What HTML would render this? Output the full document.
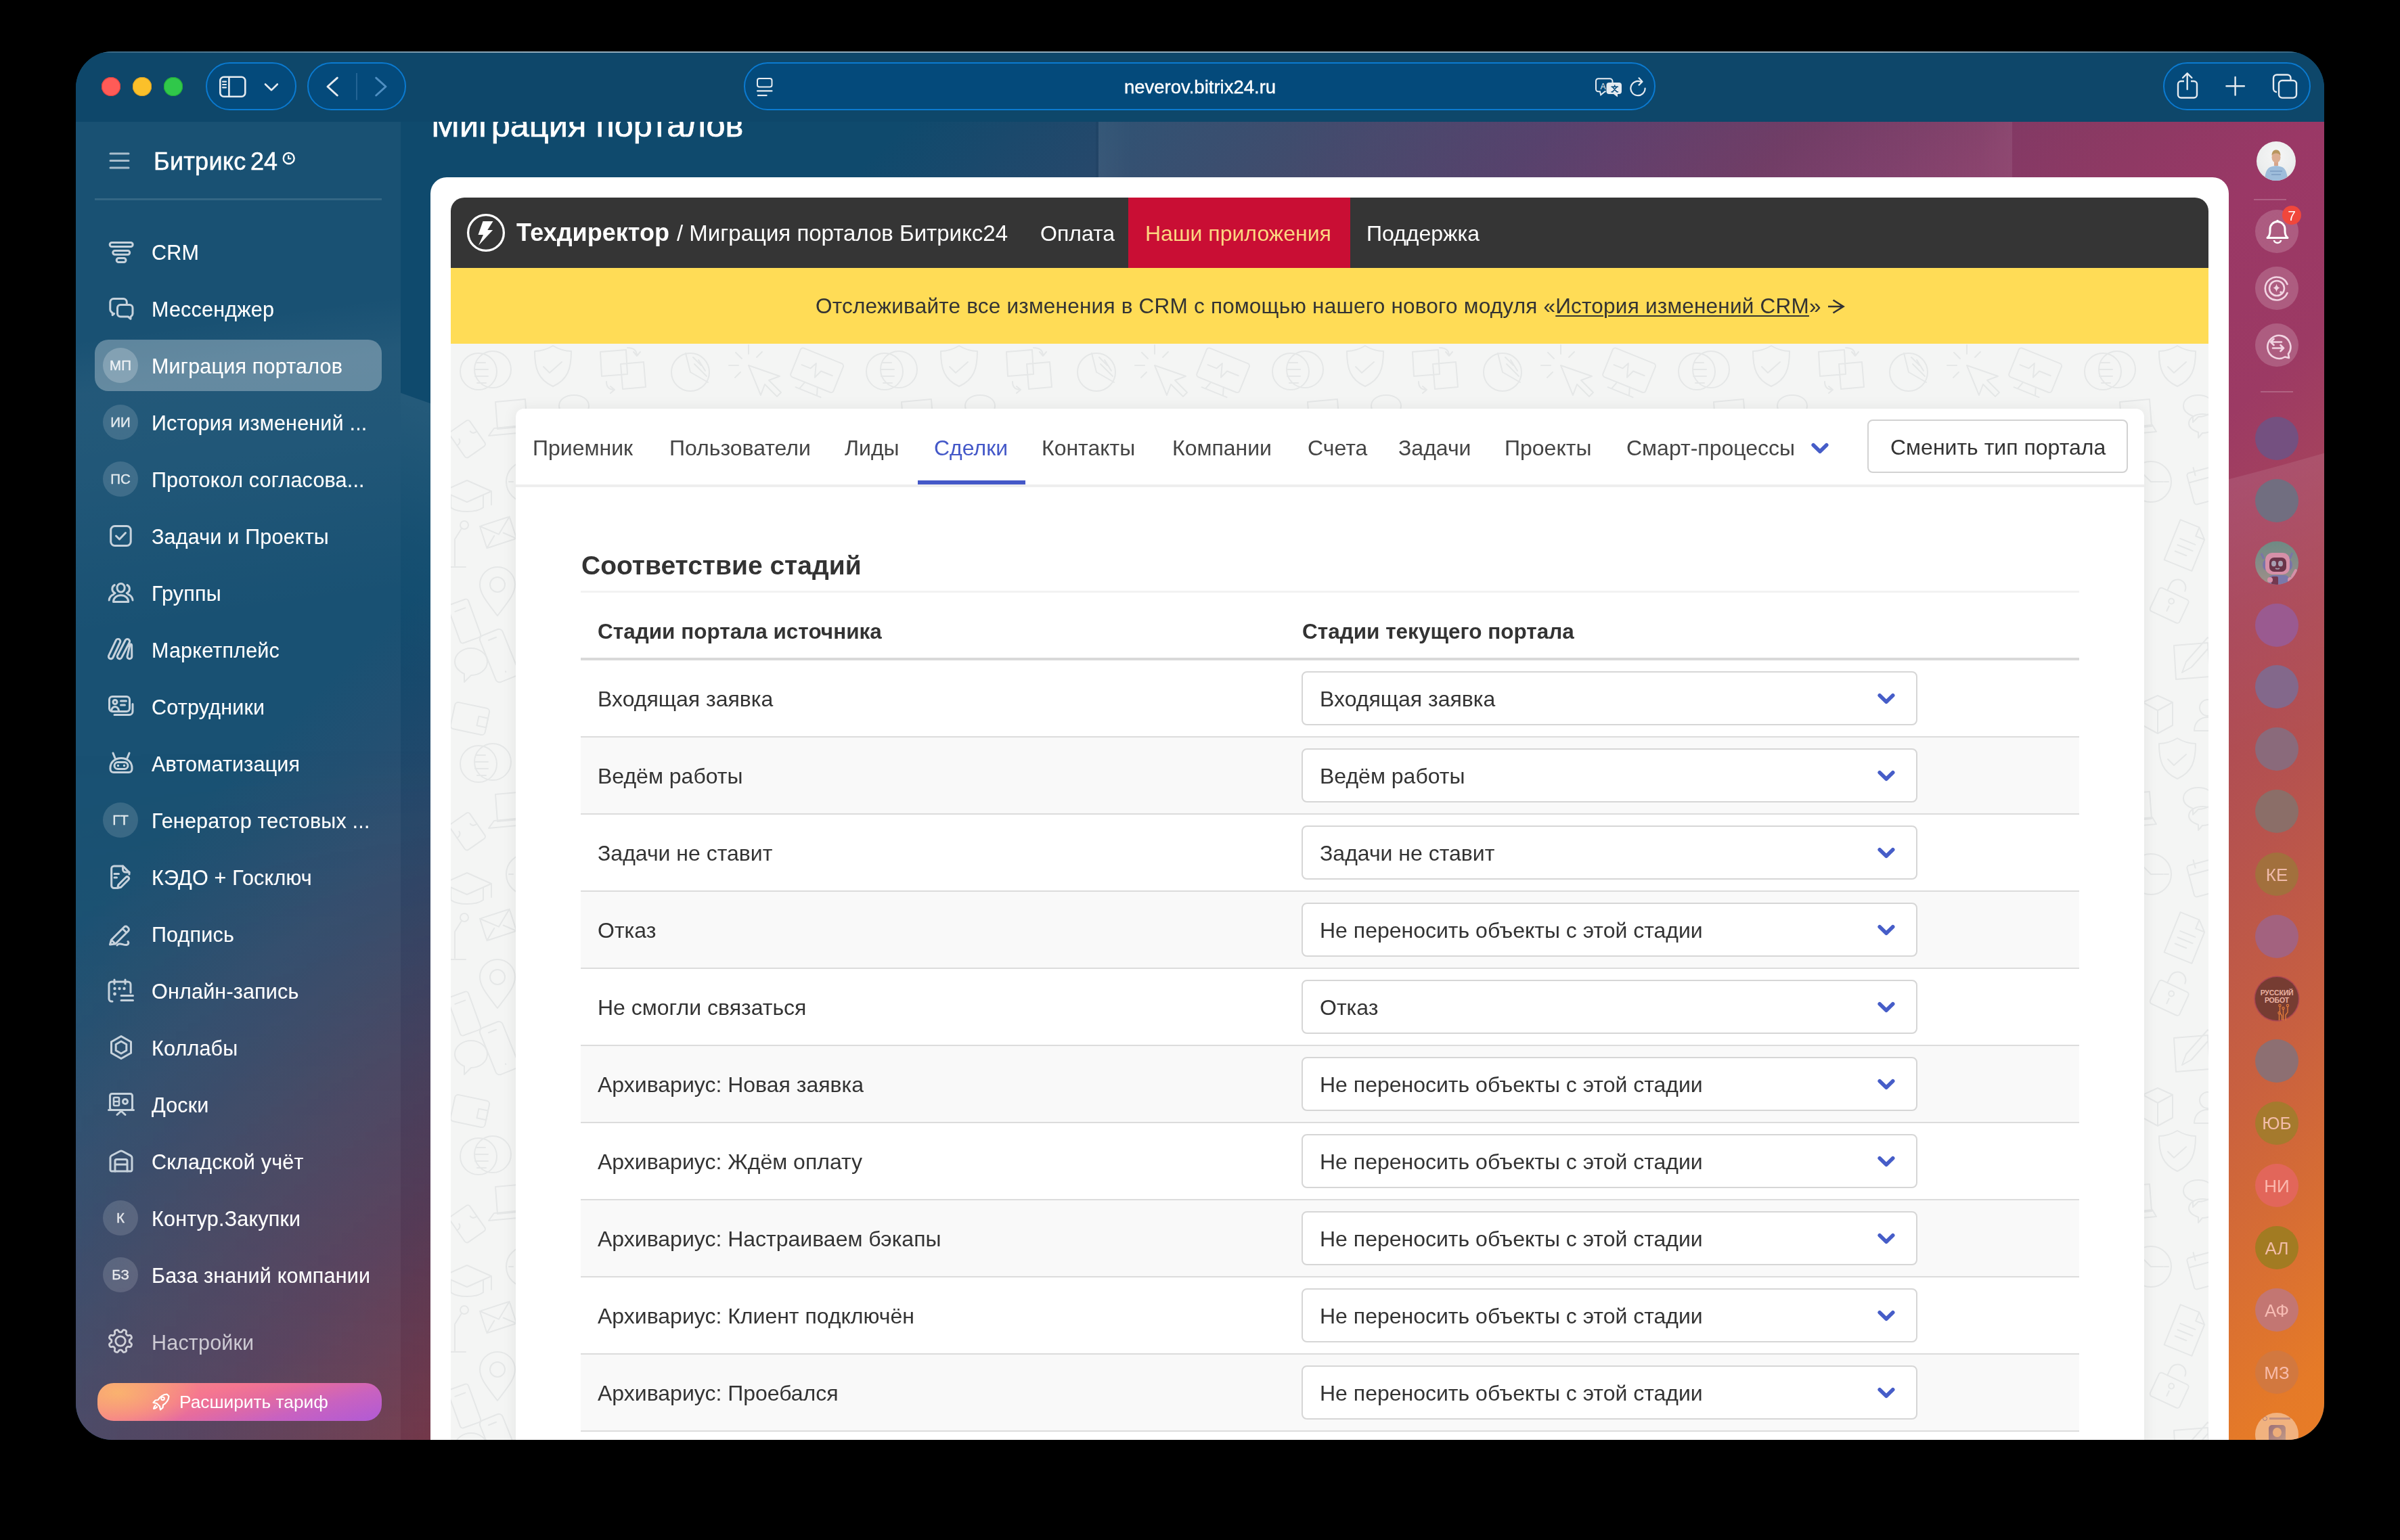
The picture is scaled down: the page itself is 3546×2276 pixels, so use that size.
<!DOCTYPE html><html><head><meta charset="utf-8"><style>
*{margin:0;padding:0;box-sizing:border-box}
html,body{width:3546px;height:2276px;background:#000;overflow:hidden;font-family:"Liberation Sans", sans-serif}
.t{position:absolute;line-height:1;white-space:nowrap;-webkit-font-smoothing:antialiased;will-change:transform}
.a{position:absolute}
#win{position:absolute;left:112px;top:76px;width:3322px;height:2052px;border-radius:54px;overflow:hidden;background:#0e476a}
#pg{position:absolute;left:-112px;top:-76px;width:3546px;height:2276px}
</style></head><body>
<div id="win"><div id="pg">
<div class="a" style="left:112px;top:180px;width:3322px;height:1948px;background:linear-gradient(136deg,#0f4a6d 0%,#0f4a6d 23%,#26486b 29.5%,#3d3f62 37%,#47395e 41%,#663453 48%,#843a62 54%,#9a3866 62%,#9c3a64 68%,#b5524f 80%,#c86040 87.5%,#e57a28 97.7%,#e87c26 100%)"></div>
<div class="a" style="left:112px;top:1100px;width:524px;height:1028px;background:linear-gradient(to right,rgba(120,110,100,0.10) 0%,rgba(170,70,40,0.22) 100%);-webkit-mask-image:linear-gradient(to bottom,transparent 0%,rgba(0,0,0,0.5) 50%,#000 100%)"></div>
<div class="a" style="left:592px;top:180px;width:2842px;height:1948px;background:radial-gradient(circle 4600px at 1558px -3928px,rgba(255,255,255,0) 4600px,rgba(255,255,255,0.09) 4601px,rgba(255,255,255,0.03) 4800px,rgba(255,255,255,0) 5000px)"></div>
<div class="a" style="left:112px;top:180px;width:480px;height:1948px;background:linear-gradient(172deg,rgba(255,255,255,0) 320px,rgba(255,255,255,0.045) 400px,rgba(255,255,255,0.035) 520px,rgba(255,255,255,0) 760px),rgba(255,255,255,0.045)"></div>
<div class="a" style="left:1900px;top:180px;width:1200px;height:82px;background:linear-gradient(to right,rgba(120,40,150,0) 0%,rgba(120,40,150,0.16) 40%,rgba(120,40,150,0.14) 70%,rgba(120,40,150,0) 100%)"></div>
<div class="a" style="left:1619px;top:180px;width:4px;height:82px;background:rgba(0,20,50,0.08)"></div>
<div class="a" style="left:1623px;top:180px;width:1350px;height:82px;background:linear-gradient(to right,rgba(255,255,255,0.085) 0px,rgba(255,255,255,0.055) 50px,rgba(255,255,255,0.055) 1300px,rgba(255,255,255,0.08) 1350px)"></div>
<div class="t" style="left:637px;top:159.8px;font-size:50.5px;color:#fff;font-weight:normal;-webkit-text-stroke:0.7px #fff">Миграция порталов</div>
<div class="a" style="left:112px;top:76px;width:3322px;height:104px;background:#0e476a"></div>
<div class="a" style="left:112px;top:76px;width:3322px;height:2px;background:linear-gradient(to right,rgba(255,255,255,0.15),rgba(255,255,255,0.55) 20%,rgba(255,255,255,0.55) 80%,rgba(255,255,255,0.15))"></div>
<div class="a" style="left:150.0px;top:113.5px;width:28px;height:28px;border-radius:50%;background:#ff5b57;box-shadow:inset 0 0 0 1px #e2403c"></div>
<div class="a" style="left:196.0px;top:113.5px;width:28px;height:28px;border-radius:50%;background:#fbc02a;box-shadow:inset 0 0 0 1px #dea122"></div>
<div class="a" style="left:242.0px;top:113.5px;width:28px;height:28px;border-radius:50%;background:#30c84a;box-shadow:inset 0 0 0 1px #22a83a"></div>
<div class="a" style="left:304px;top:92px;width:134px;height:71px;border:2px solid #0b7ad0;background:#044a7b;border-radius:36px"></div>
<div class="a" style="left:454px;top:92px;width:146px;height:71px;border:2px solid #0b7ad0;background:#044a7b;border-radius:36px"></div>
<div class="a" style="left:1099px;top:92px;width:1347px;height:71px;border:2px solid #0b7ad0;background:#044a7b;border-radius:36px"></div>
<div class="a" style="left:3196px;top:92px;width:218px;height:71px;border:2px solid #0b7ad0;background:#044a7b;border-radius:36px"></div>
<svg class="a" style="left:318px;top:106px" width="100" height="44" viewBox="0 0 100 44" fill="none"><rect x="7.3" y="7.8" width="37" height="29" rx="5.5" stroke="#e6ebf0" stroke-width="2.6"/>
<line x1="20.4" y1="8" x2="20.4" y2="37" stroke="#e6ebf0" stroke-width="2.6"/>
<line x1="11" y1="14.7" x2="16" y2="14.7" stroke="#e6ebf0" stroke-width="2.2" stroke-linecap="round"/>
<line x1="11" y1="19" x2="16" y2="19" stroke="#e6ebf0" stroke-width="2.2" stroke-linecap="round"/>
<line x1="11" y1="23.3" x2="16" y2="23.3" stroke="#e6ebf0" stroke-width="2.2" stroke-linecap="round"/>
<polyline points="74,18.5 83.1,27.2 91.8,18.5" stroke="#e6ebf0" stroke-width="2.6" stroke-linecap="round" stroke-linejoin="round"/></svg>
<svg class="a" style="left:470px;top:100px" width="120" height="56" viewBox="0 0 120 56" fill="none"><polyline points="28.3,15.1 14,28 28.3,41" stroke="#e6ebf0" stroke-width="3" stroke-linecap="round" stroke-linejoin="round"/>
<line x1="57" y1="8" x2="57" y2="47.7" stroke="#2d6b9c" stroke-width="1.6"/>
<polyline points="85.7,15.1 100,28 85.7,41" stroke="#4f8fc2" stroke-width="3" stroke-linecap="round" stroke-linejoin="round"/></svg>
<svg class="a" style="left:1110px;top:108px" width="40" height="40" viewBox="0 0 40 40" fill="none"><rect x="9" y="8" width="21.5" height="12.5" rx="3" stroke="#e6ebf0" stroke-width="2"/>
<line x1="9" y1="26.4" x2="30.5" y2="26.4" stroke="#e6ebf0" stroke-width="2.2" stroke-linecap="round"/>
<line x1="9" y1="33" x2="23.5" y2="33" stroke="#e6ebf0" stroke-width="2.2"/></svg>
<div class="t" style="left:1773px;top:115.0px;font-size:27.5px;color:#fff;font-weight:normal;transform:translateX(-50%);-webkit-text-stroke:0.4px #fff">neverov.bitrix24.ru</div>
<svg class="a" style="left:2350px;top:108px" width="90" height="44" viewBox="0 0 90 44" fill="none"><path d="M11.5 8.2 h17 a4 4 0 0 1 4 4 v3 M11.5 8.2 a3.5 3.5 0 0 0 -3.5 3.5 v12 a3.5 3.5 0 0 0 3.5 3.5 h2.5 l1.2 5 l6 -5 h1.5" stroke="#e6ebf0" stroke-width="2"/>
<text x="14.5" y="24" font-size="12" font-family="Liberation Sans" fill="#e6ebf0">A</text>
<path d="M27.5 14 h14.5 a4 4 0 0 1 4 4 v9 a4 4 0 0 1 -4 4 h-2 v4.5 l-6 -4.5 h-6.5 a4 4 0 0 1 -4 -4 v-9 a4 4 0 0 1 4 -4z" fill="#e6ebf0"/>
<path d="M30.5 20.2 h10.5 M35.7 17.5 v2.7 M32.3 20.2 l6.5 7.5 M39 20.2 l-6.5 7.5 M30.5 27.7 h3 M38.5 27.7 h2.5" stroke="#044a7b" stroke-width="1.6"/>
<path d="M80.6 22.6 a10.6 10.6 0 1 1 -6.2 -9.7" stroke="#e6ebf0" stroke-width="2.2" stroke-linecap="round"/>
<polyline points="71.5,7.3 76.5,12.7 71.5,17.6" stroke="#e6ebf0" stroke-width="2.2" stroke-linecap="round" stroke-linejoin="round"/></svg>
<svg class="a" style="left:3200px;top:100px" width="210" height="56" viewBox="0 0 210 56" fill="none"><path d="M27 20 h-4.5 a4.5 4.5 0 0 0 -4.5 4.5 v15.5 a4.5 4.5 0 0 0 4.5 4.5 h19 a4.5 4.5 0 0 0 4.5 -4.5 v-15.5 a4.5 4.5 0 0 0 -4.5 -4.5 h-4.5" stroke="#e6ebf0" stroke-width="2.4"/>
<path d="M31.7 32 v-23 M25 15 l6.7 -6.7 l6.7 6.7" stroke="#e6ebf0" stroke-width="2.4" stroke-linecap="round" stroke-linejoin="round"/>
<path d="M102.6 14 v26.5 M89.4 27.3 h26.5" stroke="#e6ebf0" stroke-width="2.4" stroke-linecap="round"/>
<path d="M164 36 a5 5 0 0 1 -5 -5 v-15.5 a5 5 0 0 1 5 -5 h15.5 a5 5 0 0 1 5 5 v3" stroke="#e6ebf0" stroke-width="2.4"/>
<rect x="167" y="19" width="26" height="25.6" rx="5" stroke="#e6ebf0" stroke-width="2.4"/></svg>
<svg class="a" style="left:150px;top:215px" width="60" height="44" viewBox="0 0 60 44" fill="none"><path d="M13 12 h27 M13 22.5 h27 M13 33 h27" stroke="#a9bdcc" stroke-width="3" stroke-linecap="round"/></svg>
<div class="t" style="left:226.5px;top:220.5px;font-size:36px;color:#fff;font-weight:normal;-webkit-text-stroke:0.5px #fff;letter-spacing:0.3px">Битрикс</div>
<div class="t" style="left:370px;top:220.5px;font-size:36px;color:#fff;font-weight:normal;-webkit-text-stroke:0.5px #fff">24</div>
<svg class="a" style="left:414px;top:222px" width="26" height="24" viewBox="0 0 26 24" fill="none"><circle cx="12.7" cy="12" r="8" stroke="#fff" stroke-width="2.4"/><path d="M12.2 7.5 v5 h4" stroke="#fff" stroke-width="2.2"/></svg>
<div class="a" style="left:140px;top:293px;width:424px;height:3px;background:rgba(255,255,255,0.12)"></div>
<svg class="a" style="left:158.5px;top:352px" width="40" height="40" viewBox="0 0 40 40" fill="none"><rect x="3.2" y="6.5" width="34" height="6" rx="3" stroke="#c6d2dc" stroke-width="3" fill="none" stroke-linecap="round" stroke-linejoin="round"/><rect x="7.8" y="18.5" width="24.9" height="5.7" rx="2.85" stroke="#c6d2dc" stroke-width="3" fill="none" stroke-linecap="round" stroke-linejoin="round"/><rect x="13.2" y="29.5" width="13.8" height="6" rx="3" stroke="#c6d2dc" stroke-width="3" fill="none" stroke-linecap="round" stroke-linejoin="round"/></svg>
<svg class="a" style="left:158.5px;top:436px" width="40" height="40" viewBox="0 0 40 40" fill="none"><path d="M28.3 13 v-2.5 a5 5 0 0 0 -5 -5 h-14.5 a5 5 0 0 0 -5 5 v11 c0 1.5 .5 2.5 1.8 3.6 l1.6 1.4 v3.2 l2.5 -2.2" stroke="#c6d2dc" stroke-width="3" fill="none" stroke-linecap="round" stroke-linejoin="round"/><path d="M19 14.5 h13.5 a4.5 4.5 0 0 1 4.5 4.5 v8.5 c0 1.5 -.5 2.5 -1.8 3.6 l-1.2 1 v3.2 l-3.8 -3.3 h-11.2 a4.5 4.5 0 0 1 -4.5 -4.5 v-8.5 a4.5 4.5 0 0 1 4.5 -4.5z" stroke="#c6d2dc" stroke-width="3" fill="none" stroke-linecap="round" stroke-linejoin="round"/></svg>
<svg class="a" style="left:158.5px;top:772px" width="40" height="40" viewBox="0 0 40 40" fill="none"><rect x="4.7" y="5.5" width="29.5" height="29" rx="6" stroke="#c6d2dc" stroke-width="3" fill="none" stroke-linecap="round" stroke-linejoin="round"/><polyline points="12.5,20 17.5,25 26.5,15.5" stroke="#c6d2dc" stroke-width="3" fill="none" stroke-linecap="round" stroke-linejoin="round"/></svg>
<svg class="a" style="left:158.5px;top:856px" width="40" height="40" viewBox="0 0 40 40" fill="none"><ellipse cx="19.6" cy="12.8" rx="5.6" ry="6.3" stroke="#c6d2dc" stroke-width="3" fill="none" stroke-linecap="round" stroke-linejoin="round"/><path d="M8.5 33.4 c0 -6 5 -9.7 11.1 -9.7 s11.1 3.7 11.1 9.7 z" stroke="#c6d2dc" stroke-width="3" fill="none" stroke-linecap="round" stroke-linejoin="round"/><path d="M10.3 8.6 c-4.8 2.6 -4.8 9.4 .7 12 M28.9 8.6 c4.8 2.6 4.8 9.4 -.7 12 M9 22.4 c-3.5 1.5 -6.5 4.5 -6.8 8.6 M30.2 22.4 c3.5 1.5 6.5 4.5 6.8 8.6" stroke="#c6d2dc" stroke-width="3" fill="none" stroke-linecap="round" stroke-linejoin="round"/></svg>
<svg class="a" style="left:158.5px;top:940px" width="40" height="40" viewBox="0 0 40 40" fill="none"><path d="M7.88 31.75 L18.48 9.25 A3.4 3.4 0 0 0 12.32 6.35 L1.72 28.85 A3.4 3.4 0 0 0 7.88 31.75z M20.62 31.86 L32.22 9.36 A3.4 3.4 0 0 0 26.18 6.24 L14.58 28.74 A3.4 3.4 0 0 0 20.62 31.86z M29 30.3 a3.4 3.4 0 0 0 6.8 0 L35.6 13.5 c-.1 -1.6 -1.8 -2 -2.6 -.6 L29.3 28.8z" stroke="#c6d2dc" stroke-width="3" fill="none" stroke-linecap="round" stroke-linejoin="round"/></svg>
<svg class="a" style="left:158.5px;top:1024px" width="40" height="40" viewBox="0 0 40 40" fill="none"><path d="M10 32.5 h22 a5 5 0 0 0 5 -5 v-11" stroke="#c6d2dc" stroke-width="3" fill="none" stroke-linecap="round" stroke-linejoin="round"/><rect x="2.5" y="5.5" width="30" height="22" rx="4.5" stroke="#c6d2dc" stroke-width="3" fill="none" stroke-linecap="round" stroke-linejoin="round"/><circle cx="11" cy="13.5" r="3" stroke="#c6d2dc" stroke-width="3" fill="none" stroke-linecap="round" stroke-linejoin="round"/><path d="M5.5 26 c1 -4 3 -5.5 5.5 -5.5 s4.5 1.5 5.5 5.5 M19.5 12 h8 M19.5 18 h6" stroke="#c6d2dc" stroke-width="3" fill="none" stroke-linecap="round" stroke-linejoin="round"/></svg>
<svg class="a" style="left:158.5px;top:1108px" width="40" height="40" viewBox="0 0 40 40" fill="none"><path d="M4 27 c0 -9 7 -14.5 16 -14.5 s16 5.5 16 14.5 v1.5 c0 3 -2 5 -5 5 h-22 c-3 0 -5 -2 -5 -5z M11 12.5 L8 5 M29 12.5 L32 5" stroke="#c6d2dc" stroke-width="3" fill="none" stroke-linecap="round" stroke-linejoin="round"/><rect x="10" y="18.5" width="20" height="10" rx="5" stroke="#c6d2dc" stroke-width="3" fill="none" stroke-linecap="round" stroke-linejoin="round"/><circle cx="15.5" cy="23.5" r="1" fill="#c6d2dc" stroke="#c6d2dc" stroke-width="1.5"/><circle cx="24.5" cy="23.5" r="1" fill="#c6d2dc" stroke="#c6d2dc" stroke-width="1.5"/></svg>
<svg class="a" style="left:158.5px;top:1276px" width="40" height="40" viewBox="0 0 40 40" fill="none"><path d="M13 36.5 h-3.5 a3.8 3.8 0 0 1 -3.8 -3.8 v-25 a3.8 3.8 0 0 1 3.8 -3.8 h13 l9.5 9.5 v2.5" stroke="#c6d2dc" stroke-width="3" fill="none" stroke-linecap="round" stroke-linejoin="round"/><path d="M22.5 4 v5 a4 4 0 0 0 4 4 h5.5" stroke="#c6d2dc" stroke-width="3" fill="none" stroke-linecap="round" stroke-linejoin="round"/><path d="M10 15.5 h6.5 M10 21 h3.5" stroke="#c6d2dc" stroke-width="3" fill="none" stroke-linecap="round" stroke-linejoin="round"/><path d="M14.5 36.5 l1.5 -5 l11 -11 a2.6 2.6 0 0 1 3.7 3.7 l-11 11z" stroke="#c6d2dc" stroke-width="3" fill="none" stroke-linecap="round" stroke-linejoin="round"/></svg>
<svg class="a" style="left:158.5px;top:1360px" width="40" height="40" viewBox="0 0 40 40" fill="none"><path d="M3.5 36 l2 -7 l19 -19 a3.2 3.2 0 0 1 4.5 0 l1.5 1.5 a3.2 3.2 0 0 1 0 4.5 l-19 19z M22 12.5 l6 6 M5.5 29 l5.5 5.5" stroke="#c6d2dc" stroke-width="3" fill="none" stroke-linecap="round" stroke-linejoin="round"/><path d="M14 37 c2 -3 3 -2 5 -2 s6 2 9 1.5 c3 -.5 3.5 -3 2 -5" stroke="#c6d2dc" stroke-width="3" fill="none" stroke-linecap="round" stroke-linejoin="round"/></svg>
<svg class="a" style="left:158.5px;top:1444px" width="40" height="40" viewBox="0 0 40 40" fill="none"><path d="M7 36 h-1 a4 4 0 0 1 -4 -4 v-21 a4 4 0 0 1 4 -4 h24 a4 4 0 0 1 4 4 v12 M10 4 v6 M26 4 v6" stroke="#c6d2dc" stroke-width="3" fill="none" stroke-linecap="round" stroke-linejoin="round"/><circle cx="10.5" cy="17" r="2.2" fill="#c6d2dc"/><circle cx="17.5" cy="17" r="2.2" fill="#c6d2dc"/><circle cx="24.5" cy="17" r="2.2" fill="#c6d2dc"/><circle cx="10.5" cy="25" r="2.4" fill="#c6d2dc"/><path d="M20 27.5 h17.5 M20 34.5 h17.5" stroke="#c6d2dc" stroke-width="3" fill="none" stroke-linecap="round" stroke-linejoin="round"/></svg>
<svg class="a" style="left:158.5px;top:1528px" width="40" height="40" viewBox="0 0 40 40" fill="none"><path d="M20 3.5 L34.5 11.8 V28.2 L20 36.5 L5.5 28.2 V11.8z" stroke="#c6d2dc" stroke-width="3" fill="none" stroke-linecap="round" stroke-linejoin="round"/><path d="M20 11 L27.8 15.5 V24.5 L20 29 L12.2 24.5 V15.5z" stroke="#c6d2dc" stroke-width="3" fill="none" stroke-linecap="round" stroke-linejoin="round"/></svg>
<svg class="a" style="left:158.5px;top:1612px" width="40" height="40" viewBox="0 0 40 40" fill="none"><rect x="3.5" y="4.5" width="33" height="24" rx="3" stroke="#c6d2dc" stroke-width="3" fill="none" stroke-linecap="round" stroke-linejoin="round"/><path d="M1.5 28.5 h37 M14 35.5 l6 -5.5 l6 5.5" stroke="#c6d2dc" stroke-width="3" fill="none" stroke-linecap="round" stroke-linejoin="round"/><rect x="9" y="10" width="8" height="12" rx="1.5" stroke="#c6d2dc" stroke-width="2.6" fill="none"/><path d="M9 16 h8" stroke="#c6d2dc" stroke-width="2.4"/><circle cx="26" cy="16" r="3.5" stroke="#c6d2dc" stroke-width="3" fill="none" stroke-linecap="round" stroke-linejoin="round"/></svg>
<svg class="a" style="left:158.5px;top:1696px" width="40" height="40" viewBox="0 0 40 40" fill="none"><path d="M4 33 V15 c0 -1.5 .7 -2.5 2 -3.2 L18 5.5 c1.3 -.6 2.7 -.6 4 0 L34 11.8 c1.3 .7 2 1.7 2 3.2 V33 c0 1 -1 2 -2 2 H6 c-1 0 -2 -1 -2 -2z" stroke="#c6d2dc" stroke-width="3" fill="none" stroke-linecap="round" stroke-linejoin="round"/><path d="M11 35 V20 a2.5 2.5 0 0 1 2.5 -2.5 h13 a2.5 2.5 0 0 1 2.5 2.5 V35 M11 25 h18" stroke="#c6d2dc" stroke-width="3" fill="none" stroke-linecap="round" stroke-linejoin="round"/></svg>
<svg class="a" style="left:158px;top:1962px" width="40" height="40" viewBox="0 0 40 40" fill="none"><path d="M33.20 20.00 L33.20 20.35 L33.21 20.69 L33.23 21.04 L33.29 21.40 L33.46 21.77 L33.85 22.19 L34.57 22.70 L35.44 23.28 L36.11 23.87 L36.44 24.41 L36.53 24.90 L36.48 25.36 L36.38 25.80 L36.24 26.23 L36.08 26.66 L35.89 27.08 L35.68 27.48 L35.44 27.87 L35.15 28.22 L34.74 28.51 L34.13 28.66 L33.24 28.60 L32.21 28.39 L31.35 28.24 L30.77 28.27 L30.39 28.41 L30.09 28.62 L29.83 28.85 L29.58 29.09 L29.33 29.33 L29.09 29.58 L28.85 29.83 L28.62 30.09 L28.41 30.39 L28.27 30.77 L28.24 31.35 L28.39 32.21 L28.60 33.24 L28.66 34.13 L28.51 34.74 L28.22 35.15 L27.87 35.44 L27.48 35.68 L27.08 35.89 L26.66 36.08 L26.23 36.24 L25.80 36.38 L25.36 36.48 L24.90 36.53 L24.41 36.44 L23.87 36.11 L23.28 35.44 L22.70 34.57 L22.19 33.85 L21.77 33.46 L21.40 33.29 L21.04 33.23 L20.69 33.21 L20.35 33.20 L20.00 33.20 L19.65 33.20 L19.31 33.21 L18.96 33.23 L18.60 33.29 L18.23 33.46 L17.81 33.85 L17.30 34.57 L16.72 35.44 L16.13 36.11 L15.59 36.44 L15.10 36.53 L14.64 36.48 L14.20 36.38 L13.77 36.24 L13.34 36.08 L12.92 35.89 L12.52 35.68 L12.13 35.44 L11.78 35.15 L11.49 34.74 L11.34 34.13 L11.40 33.24 L11.61 32.21 L11.76 31.35 L11.73 30.77 L11.59 30.39 L11.38 30.09 L11.15 29.83 L10.91 29.58 L10.67 29.33 L10.42 29.09 L10.17 28.85 L9.91 28.62 L9.61 28.41 L9.23 28.27 L8.65 28.24 L7.79 28.39 L6.76 28.60 L5.87 28.66 L5.26 28.51 L4.85 28.22 L4.56 27.87 L4.32 27.48 L4.11 27.08 L3.92 26.66 L3.76 26.23 L3.62 25.80 L3.52 25.36 L3.47 24.90 L3.56 24.41 L3.89 23.87 L4.56 23.28 L5.43 22.70 L6.15 22.19 L6.54 21.77 L6.71 21.40 L6.77 21.04 L6.79 20.69 L6.80 20.35 L6.80 20.00 L6.80 19.65 L6.79 19.31 L6.77 18.96 L6.71 18.60 L6.54 18.23 L6.15 17.81 L5.43 17.30 L4.56 16.72 L3.89 16.13 L3.56 15.59 L3.47 15.10 L3.52 14.64 L3.62 14.20 L3.76 13.77 L3.92 13.34 L4.11 12.92 L4.32 12.52 L4.56 12.13 L4.85 11.78 L5.26 11.49 L5.87 11.34 L6.76 11.40 L7.79 11.61 L8.65 11.76 L9.23 11.73 L9.61 11.59 L9.91 11.38 L10.17 11.15 L10.42 10.91 L10.67 10.67 L10.91 10.42 L11.15 10.17 L11.38 9.91 L11.59 9.61 L11.73 9.23 L11.76 8.65 L11.61 7.79 L11.40 6.76 L11.34 5.87 L11.49 5.26 L11.78 4.85 L12.13 4.56 L12.52 4.32 L12.92 4.11 L13.34 3.92 L13.77 3.76 L14.20 3.62 L14.64 3.52 L15.10 3.47 L15.59 3.56 L16.13 3.89 L16.72 4.56 L17.30 5.43 L17.81 6.15 L18.23 6.54 L18.60 6.71 L18.96 6.77 L19.31 6.79 L19.65 6.80 L20.00 6.80 L20.35 6.80 L20.69 6.79 L21.04 6.77 L21.40 6.71 L21.77 6.54 L22.19 6.15 L22.70 5.43 L23.28 4.56 L23.87 3.89 L24.41 3.56 L24.90 3.47 L25.36 3.52 L25.80 3.62 L26.23 3.76 L26.66 3.92 L27.08 4.11 L27.48 4.32 L27.87 4.56 L28.22 4.85 L28.51 5.26 L28.66 5.87 L28.60 6.76 L28.39 7.79 L28.24 8.65 L28.27 9.23 L28.41 9.61 L28.62 9.91 L28.85 10.17 L29.09 10.42 L29.33 10.67 L29.58 10.91 L29.83 11.15 L30.09 11.38 L30.39 11.59 L30.77 11.73 L31.35 11.76 L32.21 11.61 L33.24 11.40 L34.13 11.34 L34.74 11.49 L35.15 11.78 L35.44 12.13 L35.68 12.52 L35.89 12.92 L36.08 13.34 L36.24 13.77 L36.38 14.20 L36.48 14.64 L36.53 15.10 L36.44 15.59 L36.11 16.13 L35.44 16.72 L34.57 17.30 L33.85 17.81 L33.46 18.23 L33.29 18.60 L33.23 18.96 L33.21 19.31 L33.20 19.65z" stroke="#cfd0d8" stroke-width="2.8" stroke-linejoin="round" fill="none"/><circle cx="20" cy="20" r="7.2" stroke="#cfd0d8" stroke-width="2.8" fill="none"/></svg>
<div class="a" style="left:140px;top:502px;width:424px;height:76px;background:rgba(255,255,255,0.3);border-radius:20px"></div>
<div class="t" style="left:223.5px;top:358.2px;font-size:30.5px;color:#fff;font-weight:normal;-webkit-text-stroke:0.1px #fff;letter-spacing:0.2px">CRM</div>
<div class="t" style="left:223.5px;top:442.2px;font-size:30.5px;color:#fff;font-weight:normal;-webkit-text-stroke:0.1px #fff;letter-spacing:0.2px">Мессенджер</div>
<div class="a" style="left:152.0px;top:514.0px;width:52px;height:52px;border-radius:50%;background:rgba(255,255,255,0.22)"></div>
<div class="t" style="left:178px;top:530.1px;font-size:20.5px;color:rgba(255,255,255,0.82);font-weight:normal;transform:translateX(-50%);-webkit-text-stroke:0.4px rgba(255,255,255,0.82)">МП</div>
<div class="t" style="left:223.5px;top:526.2px;font-size:30.5px;color:#fff;font-weight:normal;-webkit-text-stroke:0.1px #fff;letter-spacing:0.2px">Миграция порталов</div>
<div class="a" style="left:152.0px;top:598.0px;width:52px;height:52px;border-radius:50%;background:rgba(255,255,255,0.14)"></div>
<div class="t" style="left:178px;top:614.1px;font-size:20.5px;color:rgba(255,255,255,0.82);font-weight:normal;transform:translateX(-50%);-webkit-text-stroke:0.4px rgba(255,255,255,0.82)">ИИ</div>
<div class="t" style="left:223.5px;top:610.2px;font-size:30.5px;color:#fff;font-weight:normal;-webkit-text-stroke:0.1px #fff;letter-spacing:0.2px">История изменений ...</div>
<div class="a" style="left:152.0px;top:682.0px;width:52px;height:52px;border-radius:50%;background:rgba(255,255,255,0.14)"></div>
<div class="t" style="left:178px;top:698.1px;font-size:20.5px;color:rgba(255,255,255,0.82);font-weight:normal;transform:translateX(-50%);-webkit-text-stroke:0.4px rgba(255,255,255,0.82)">ПС</div>
<div class="t" style="left:223.5px;top:694.2px;font-size:30.5px;color:#fff;font-weight:normal;-webkit-text-stroke:0.1px #fff;letter-spacing:0.2px">Протокол согласова...</div>
<div class="t" style="left:223.5px;top:778.2px;font-size:30.5px;color:#fff;font-weight:normal;-webkit-text-stroke:0.1px #fff;letter-spacing:0.2px">Задачи и Проекты</div>
<div class="t" style="left:223.5px;top:862.2px;font-size:30.5px;color:#fff;font-weight:normal;-webkit-text-stroke:0.1px #fff;letter-spacing:0.2px">Группы</div>
<div class="t" style="left:223.5px;top:946.2px;font-size:30.5px;color:#fff;font-weight:normal;-webkit-text-stroke:0.1px #fff;letter-spacing:0.2px">Маркетплейс</div>
<div class="t" style="left:223.5px;top:1030.2px;font-size:30.5px;color:#fff;font-weight:normal;-webkit-text-stroke:0.1px #fff;letter-spacing:0.2px">Сотрудники</div>
<div class="t" style="left:223.5px;top:1114.2px;font-size:30.5px;color:#fff;font-weight:normal;-webkit-text-stroke:0.1px #fff;letter-spacing:0.2px">Автоматизация</div>
<div class="a" style="left:152.0px;top:1186.0px;width:52px;height:52px;border-radius:50%;background:rgba(255,255,255,0.14)"></div>
<div class="t" style="left:178px;top:1202.1px;font-size:20.5px;color:rgba(255,255,255,0.82);font-weight:normal;transform:translateX(-50%);-webkit-text-stroke:0.4px rgba(255,255,255,0.82)">ГТ</div>
<div class="t" style="left:223.5px;top:1198.2px;font-size:30.5px;color:#fff;font-weight:normal;-webkit-text-stroke:0.1px #fff;letter-spacing:0.2px">Генератор тестовых ...</div>
<div class="t" style="left:223.5px;top:1282.2px;font-size:30.5px;color:#fff;font-weight:normal;-webkit-text-stroke:0.1px #fff;letter-spacing:0.2px">КЭДО + Госключ</div>
<div class="t" style="left:223.5px;top:1366.2px;font-size:30.5px;color:#fff;font-weight:normal;-webkit-text-stroke:0.1px #fff;letter-spacing:0.2px">Подпись</div>
<div class="t" style="left:223.5px;top:1450.2px;font-size:30.5px;color:#fff;font-weight:normal;-webkit-text-stroke:0.1px #fff;letter-spacing:0.2px">Онлайн-запись</div>
<div class="t" style="left:223.5px;top:1534.2px;font-size:30.5px;color:#fff;font-weight:normal;-webkit-text-stroke:0.1px #fff;letter-spacing:0.2px">Коллабы</div>
<div class="t" style="left:223.5px;top:1618.2px;font-size:30.5px;color:#fff;font-weight:normal;-webkit-text-stroke:0.1px #fff;letter-spacing:0.2px">Доски</div>
<div class="t" style="left:223.5px;top:1702.2px;font-size:30.5px;color:#fff;font-weight:normal;-webkit-text-stroke:0.1px #fff;letter-spacing:0.2px">Складской учёт</div>
<div class="a" style="left:152.0px;top:1774.0px;width:52px;height:52px;border-radius:50%;background:rgba(255,255,255,0.14)"></div>
<div class="t" style="left:178px;top:1790.1px;font-size:20.5px;color:rgba(255,255,255,0.82);font-weight:normal;transform:translateX(-50%);-webkit-text-stroke:0.4px rgba(255,255,255,0.82)">К</div>
<div class="t" style="left:223.5px;top:1786.2px;font-size:30.5px;color:#fff;font-weight:normal;-webkit-text-stroke:0.1px #fff;letter-spacing:0.2px">Контур.Закупки</div>
<div class="a" style="left:152.0px;top:1858.0px;width:52px;height:52px;border-radius:50%;background:rgba(255,255,255,0.14)"></div>
<div class="t" style="left:178px;top:1874.1px;font-size:20.5px;color:rgba(255,255,255,0.82);font-weight:normal;transform:translateX(-50%);-webkit-text-stroke:0.4px rgba(255,255,255,0.82)">БЗ</div>
<div class="t" style="left:223.5px;top:1870.2px;font-size:30.5px;color:#fff;font-weight:normal;-webkit-text-stroke:0.1px #fff;letter-spacing:0.2px">База знаний компании</div>
<div class="t" style="left:223.5px;top:1968.7px;font-size:30.5px;color:#cdcad3;font-weight:normal;letter-spacing:0.2px">Настройки</div>
<div class="a" style="left:144px;top:2044px;width:420px;height:56px;border-radius:24px;background:radial-gradient(ellipse 120px 60px at 30px 14px,rgba(250,180,110,0.95),rgba(250,180,110,0) 100%),linear-gradient(165deg,#f6907e 0%,#f57690 35%,#e66c9e 50%,#c862c0 72%,#b05ad6 100%)"></div>
<div class="t" style="left:265px;top:2058.7px;font-size:26.3px;color:#fff;font-weight:normal;">Расширить тариф</div>
<svg class="a" style="left:222px;top:2056px" width="30" height="30" viewBox="0 0 30 30" fill="none"><path d="M24.5 4.5 c-6 .5 -10 3.5 -13 8.5 l-4 .5 l-3 3.5 l5 1 l4.5 4.5 l1 5 l3.5 -3 l.5 -4 c5 -3 8 -7 8.5 -13z" stroke="#fff" stroke-width="2.2" fill="none" stroke-linejoin="round"/><circle cx="18.5" cy="11" r="2.3" stroke="#fff" stroke-width="2" fill="none"/><path d="M8.5 20.5 c-2 1 -3 3 -3.5 5.5 c2.5 -.5 4.5 -1.5 5.5 -3.5" stroke="#fff" stroke-width="2" fill="none" stroke-linejoin="round"/></svg>
<div class="a" style="left:636px;top:262px;width:2657px;height:1938px;background:#fff;border-radius:24px 24px 0 0"></div>
<div class="a" style="left:666px;top:292px;width:2597px;height:104px;background:#353535;border-radius:20px 20px 0 0"></div>
<div class="a" style="left:1667px;top:292px;width:328px;height:104px;background:#c90e34"></div>
<div class="a" style="left:666px;top:396px;width:2597px;height:112px;background:#ffdc56"></div>
<div class="a" style="left:666px;top:508px;width:2597px;height:1692px;background:#f4f5f4"></div>
<svg class="a" style="left:666px;top:508px" width="2597" height="1620"><defs><pattern id="dd" width="600" height="580" patternUnits="userSpaceOnUse"><g fill="none" stroke="#e5e7e7" stroke-width="2" stroke-linejoin="round" stroke-linecap="round">
<circle cx="41" cy="41" r="27"/><circle cx="62" cy="38" r="27"/><path d="M37 28 h14 M36 38 h19 M36 48 h19 M39 58 h13"/>
<path d="M151 3 c10 6 18 8 27 8 c0 26 -5 42 -27 52 c-22 -10 -27 -26 -27 -52 c9 0 17 -2 27 -8z M137 34 l9 9 l18 -16"/>
<path d="M221 12 l38 -3 l2 36 l-38 3z M251 30 l34 -3 l3 37 l-34 3z M261 6 c10 0 14 4 14 12 M270 12 l5 6 l5 -6 M230 56 c0 8 4 12 12 12 M236 63 l6 5 l-6 5"/>
<circle cx="354" cy="42" r="28"/><path d="M354 42 L347 14 M354 42 L380 57 M358 20 L370 32 M366 24 L376 40 M360 30 L378 48"/>
<path d="M440 32 L458 76 L464 60 L482 78 L488 72 L470 54 L486 48z M430 22 l-9 -9 M440 15 v-13 M425 32 h-14 M452 20 l8 -8 M428 42 l-8 8"/>
<g transform="rotate(22 540 42)"><rect x="506" y="16" width="68" height="46" rx="4"/><path d="M516 40 h14 l5 -10 l6 20 l5 -12 h18 M530 62 l-4 12 M550 62 l4 12 M520 74 h40"/></g>
<g transform="rotate(-35 24 140)"><rect x="6" y="118" width="36" height="46" rx="4"/><path d="M6 140 q8 0 8 -6 M42 140 q-8 0 -8 -6"/></g>
<path d="M66 86 l44 -4 l3 40 l-44 4z M56 136 l64 -6 l-6 -10 l-50 5z"/>
<circle cx="112" cy="204" r="30"/><path d="M112 204 l-14 -14 M112 204 h18 M86 204 h6 M132 204 h6"/>
<path d="M-12 218 l36 -16 l36 16 l-36 16z M0 224 v18 c10 8 38 8 48 0 v-18 M60 218 v20"/>
<g transform="rotate(-18 70 282)"><rect x="48" y="262" width="46" height="34" rx="3"/><path d="M48 262 l23 20 l23 -20 M48 296 l16 -14 M94 296 l-16 -14"/></g>
<circle cx="20" cy="268" r="6"/><path d="M16 273 l-10 16 M6 290 v38 M-6 330 h28"/>
<path d="M69 402 c-15 -20 -26 -32 -26 -46 a26 26 0 0 1 52 0 c0 14 -11 26 -26 46z"/><circle cx="69" cy="356" r="11"/>
<g transform="rotate(-20 20 410)"><rect x="4" y="380" width="32" height="60" rx="4"/><path d="M12 392 h16"/></g>
<g transform="rotate(-22 72 462)"><rect x="54" y="424" width="36" height="74" rx="6"/><path d="M66 434 h12 M72 486 v1"/></g>
<path d="M6 470 c0 -12 12 -20 24 -20 s24 8 24 20 s-12 20 -24 20 l-10 10 v-12 c-8 -4 -14 -10 -14 -18z"/>
<g transform="rotate(12 28 556)"><rect x="2" y="534" width="52" height="40" rx="5"/><path d="M40 548 h14 v14 h-14z"/></g>
<path d="M160 92 c0 -10 10 -16 22 -16 s22 6 22 16 s-10 16 -22 16 l-8 8 v-9 c-8 -3 -14 -8 -14 -15z M168 118 c0 -9 10 -14 20 -14 s20 5 20 14 s-9 14 -20 14 l-6 7 v-8 c-8 -3 -14 -7 -14 -13z"/>
<g transform="rotate(-15 190 210)"><rect x="170" y="186" width="50" height="48" rx="4"/><path d="M170 200 h50 M182 180 v12 M208 180 v12"/></g>
<g transform="rotate(22 164 298)"><path d="M142 266 h30 l14 14 v50 h-44z M172 266 v14 h14 M152 292 h24 M152 302 h24 M152 312 h18"/></g>
<g transform="rotate(25 140 385)"><rect x="116" y="368" width="48" height="38" rx="4"/><path d="M128 368 v-10 a12 12 0 0 1 24 0 M140 384 a4 4 0 1 1 0.1 0 M140 388 v8"/></g>
<path d="M146 446 l50 -4 l3 50 l-50 4z M158 486 l6 -16 l32 -36 l8 8 l-32 36z"/>
<path d="M100 530 l22 -10 l22 10 v34 l-22 12 l-22 -12z M100 530 l22 12 l22 -12 M122 542 v34"/>
<circle cx="196" cy="538" r="12"/><path d="M176 572 c0 -12 8 -20 20 -20 s20 8 20 20z"/>
</g></pattern></defs><rect width="2597" height="1620" fill="url(#dd)"/></svg>
<svg class="a" style="left:688px;top:314px" width="60" height="60" viewBox="0 0 60 60" fill="none"><circle cx="30" cy="30" r="26.4" stroke="#fff" stroke-width="3.3"/>
<polygon points="25.5,13 40.5,13 32.3,26 40.1,26 19,48.7 26,33 18.5,33" fill="#fff"/></svg>
<div class="t" style="left:762.5px;top:325.8px;font-size:36px;color:#fff;font-weight:bold;">Техдиректор</div>
<div class="t" style="left:1000px;top:328.4px;font-size:33px;color:#fff;font-weight:normal;">/ Миграция порталов Битрикс24</div>
<div class="t" style="left:1537px;top:329.2px;font-size:32px;color:#fff;font-weight:normal;">Оплата</div>
<div class="t" style="left:1692px;top:329.2px;font-size:32px;color:#fcd680;font-weight:normal;">Наши приложения</div>
<div class="t" style="left:2019px;top:329.2px;font-size:32px;color:#fff;font-weight:normal;">Поддержка</div>
<div class="t" style="left:1205px;top:436.8px;font-size:31.5px;color:#333;font-weight:normal;letter-spacing:0.22px">Отслеживайте все изменения в CRM с помощью нашего нового модуля «<span style="text-decoration:underline;text-underline-offset:3px;text-decoration-thickness:2px">История изменений CRM</span>»</div>
<svg class="a" style="left:2696px;top:440px" width="34" height="26" viewBox="0 0 34 26" fill="none"><path d="M5 13 h22.5 M12.5 3.5 l15 9.5 l-15 9.5" stroke="#333" stroke-width="2.6" fill="none" stroke-linejoin="miter"/></svg>
<div class="a" style="left:762px;top:604px;width:2406px;height:1596px;background:#fff;border-radius:12px 12px 0 0;box-shadow:0 0 22px rgba(0,0,0,0.07)"></div>
<div class="t" style="left:787px;top:645.6px;font-size:32px;color:#444;font-weight:normal;">Приемник</div>
<div class="t" style="left:989px;top:645.6px;font-size:32px;color:#444;font-weight:normal;">Пользователи</div>
<div class="t" style="left:1248px;top:645.6px;font-size:32px;color:#444;font-weight:normal;">Лиды</div>
<div class="t" style="left:1380px;top:645.6px;font-size:32px;color:#4458c8;font-weight:normal;">Сделки</div>
<div class="t" style="left:1539px;top:645.6px;font-size:32px;color:#444;font-weight:normal;">Контакты</div>
<div class="t" style="left:1732px;top:645.6px;font-size:32px;color:#444;font-weight:normal;">Компании</div>
<div class="t" style="left:1932px;top:645.6px;font-size:32px;color:#444;font-weight:normal;">Счета</div>
<div class="t" style="left:2066px;top:645.6px;font-size:32px;color:#444;font-weight:normal;">Задачи</div>
<div class="t" style="left:2222.5px;top:645.6px;font-size:32px;color:#444;font-weight:normal;">Проекты</div>
<div class="t" style="left:2403px;top:645.6px;font-size:32px;color:#444;font-weight:normal;">Смарт-процессы</div>
<svg class="a" style="left:2670px;top:648px" width="40" height="28" viewBox="0 0 40 28" fill="none"><polyline points="9.2,9.7 19,19.2 28.7,9.7" stroke="#465dc8" stroke-width="5.6" stroke-linecap="round" stroke-linejoin="round"/></svg>
<div class="a" style="left:762px;top:716px;width:2406px;height:4px;background:#eeeeee"></div>
<div class="a" style="left:1356px;top:710px;width:159px;height:6px;background:#4458c8"></div>
<div class="a" style="left:2759px;top:620px;width:385px;height:79px;border:2px solid #d2d2d2;border-radius:8px"></div>
<div class="t" style="left:2793px;top:644.9px;font-size:32px;color:#333;font-weight:normal;">Сменить тип портала</div>
<div class="t" style="left:859px;top:816.3px;font-size:39px;color:#333;font-weight:bold;">Соответствие стадий</div>
<div class="a" style="left:858px;top:873px;width:2214px;height:3px;background:#f2f2f2"></div>
<div class="t" style="left:883px;top:917.6px;font-size:31.5px;color:#333;font-weight:bold;">Стадии портала источника</div>
<div class="t" style="left:1924px;top:917.6px;font-size:31.5px;color:#333;font-weight:bold;">Стадии текущего портала</div>
<div class="a" style="left:858px;top:972px;width:2214px;height:4px;background:#d9d9d9"></div>
<div class="a" style="left:858px;top:1088px;width:2214px;height:2px;background:#dcdcdc"></div>
<div class="t" style="left:883px;top:1016.9px;font-size:32px;color:#333;font-weight:normal;">Входящая заявка</div>
<div class="a" style="left:1923px;top:992.4px;width:910px;height:79.60000000000002px;background:#fff;border:2px solid #d6d6d6;border-radius:8px"></div>
<div class="t" style="left:1949.5px;top:1016.9px;font-size:32px;color:#333;font-weight:normal;">Входящая заявка</div>
<svg class="a" style="left:2766px;top:1018px" width="44" height="30" viewBox="0 0 44 30" fill="none"><polyline points="11.2,9.7 21,19.2 30.7,9.7" stroke="#465dc8" stroke-width="5.6" stroke-linecap="round" stroke-linejoin="round"/></svg>
<div class="a" style="left:858px;top:1090px;width:2214px;height:112px;background:#f9f9f9"></div>
<div class="a" style="left:858px;top:1202px;width:2214px;height:2px;background:#dcdcdc"></div>
<div class="t" style="left:883px;top:1130.9px;font-size:32px;color:#333;font-weight:normal;">Ведём работы</div>
<div class="a" style="left:1923px;top:1106.4px;width:910px;height:79.59999999999991px;background:#fff;border:2px solid #d6d6d6;border-radius:8px"></div>
<div class="t" style="left:1949.5px;top:1130.9px;font-size:32px;color:#333;font-weight:normal;">Ведём работы</div>
<svg class="a" style="left:2766px;top:1132px" width="44" height="30" viewBox="0 0 44 30" fill="none"><polyline points="11.2,9.7 21,19.2 30.7,9.7" stroke="#465dc8" stroke-width="5.6" stroke-linecap="round" stroke-linejoin="round"/></svg>
<div class="a" style="left:858px;top:1316px;width:2214px;height:2px;background:#dcdcdc"></div>
<div class="t" style="left:883px;top:1244.9px;font-size:32px;color:#333;font-weight:normal;">Задачи не ставит</div>
<div class="a" style="left:1923px;top:1220.4px;width:910px;height:79.59999999999991px;background:#fff;border:2px solid #d6d6d6;border-radius:8px"></div>
<div class="t" style="left:1949.5px;top:1244.9px;font-size:32px;color:#333;font-weight:normal;">Задачи не ставит</div>
<svg class="a" style="left:2766px;top:1246px" width="44" height="30" viewBox="0 0 44 30" fill="none"><polyline points="11.2,9.7 21,19.2 30.7,9.7" stroke="#465dc8" stroke-width="5.6" stroke-linecap="round" stroke-linejoin="round"/></svg>
<div class="a" style="left:858px;top:1318px;width:2214px;height:112px;background:#f9f9f9"></div>
<div class="a" style="left:858px;top:1430px;width:2214px;height:2px;background:#dcdcdc"></div>
<div class="t" style="left:883px;top:1358.9px;font-size:32px;color:#333;font-weight:normal;">Отказ</div>
<div class="a" style="left:1923px;top:1334.4px;width:910px;height:79.59999999999991px;background:#fff;border:2px solid #d6d6d6;border-radius:8px"></div>
<div class="t" style="left:1949.5px;top:1358.9px;font-size:32px;color:#333;font-weight:normal;">Не переносить объекты с этой стадии</div>
<svg class="a" style="left:2766px;top:1360px" width="44" height="30" viewBox="0 0 44 30" fill="none"><polyline points="11.2,9.7 21,19.2 30.7,9.7" stroke="#465dc8" stroke-width="5.6" stroke-linecap="round" stroke-linejoin="round"/></svg>
<div class="a" style="left:858px;top:1544px;width:2214px;height:2px;background:#dcdcdc"></div>
<div class="t" style="left:883px;top:1472.9px;font-size:32px;color:#333;font-weight:normal;">Не смогли связаться</div>
<div class="a" style="left:1923px;top:1448.4px;width:910px;height:79.59999999999991px;background:#fff;border:2px solid #d6d6d6;border-radius:8px"></div>
<div class="t" style="left:1949.5px;top:1472.9px;font-size:32px;color:#333;font-weight:normal;">Отказ</div>
<svg class="a" style="left:2766px;top:1474px" width="44" height="30" viewBox="0 0 44 30" fill="none"><polyline points="11.2,9.7 21,19.2 30.7,9.7" stroke="#465dc8" stroke-width="5.6" stroke-linecap="round" stroke-linejoin="round"/></svg>
<div class="a" style="left:858px;top:1546px;width:2214px;height:112px;background:#f9f9f9"></div>
<div class="a" style="left:858px;top:1658px;width:2214px;height:2px;background:#dcdcdc"></div>
<div class="t" style="left:883px;top:1586.9px;font-size:32px;color:#333;font-weight:normal;">Архивариус: Новая заявка</div>
<div class="a" style="left:1923px;top:1562.4px;width:910px;height:79.59999999999991px;background:#fff;border:2px solid #d6d6d6;border-radius:8px"></div>
<div class="t" style="left:1949.5px;top:1586.9px;font-size:32px;color:#333;font-weight:normal;">Не переносить объекты с этой стадии</div>
<svg class="a" style="left:2766px;top:1588px" width="44" height="30" viewBox="0 0 44 30" fill="none"><polyline points="11.2,9.7 21,19.2 30.7,9.7" stroke="#465dc8" stroke-width="5.6" stroke-linecap="round" stroke-linejoin="round"/></svg>
<div class="a" style="left:858px;top:1772px;width:2214px;height:2px;background:#dcdcdc"></div>
<div class="t" style="left:883px;top:1700.9px;font-size:32px;color:#333;font-weight:normal;">Архивариус: Ждём оплату</div>
<div class="a" style="left:1923px;top:1676.4px;width:910px;height:79.59999999999991px;background:#fff;border:2px solid #d6d6d6;border-radius:8px"></div>
<div class="t" style="left:1949.5px;top:1700.9px;font-size:32px;color:#333;font-weight:normal;">Не переносить объекты с этой стадии</div>
<svg class="a" style="left:2766px;top:1702px" width="44" height="30" viewBox="0 0 44 30" fill="none"><polyline points="11.2,9.7 21,19.2 30.7,9.7" stroke="#465dc8" stroke-width="5.6" stroke-linecap="round" stroke-linejoin="round"/></svg>
<div class="a" style="left:858px;top:1774px;width:2214px;height:112px;background:#f9f9f9"></div>
<div class="a" style="left:858px;top:1886px;width:2214px;height:2px;background:#dcdcdc"></div>
<div class="t" style="left:883px;top:1814.9px;font-size:32px;color:#333;font-weight:normal;">Архивариус: Настраиваем бэкапы</div>
<div class="a" style="left:1923px;top:1790.4px;width:910px;height:79.59999999999991px;background:#fff;border:2px solid #d6d6d6;border-radius:8px"></div>
<div class="t" style="left:1949.5px;top:1814.9px;font-size:32px;color:#333;font-weight:normal;">Не переносить объекты с этой стадии</div>
<svg class="a" style="left:2766px;top:1816px" width="44" height="30" viewBox="0 0 44 30" fill="none"><polyline points="11.2,9.7 21,19.2 30.7,9.7" stroke="#465dc8" stroke-width="5.6" stroke-linecap="round" stroke-linejoin="round"/></svg>
<div class="a" style="left:858px;top:2000px;width:2214px;height:2px;background:#dcdcdc"></div>
<div class="t" style="left:883px;top:1928.9px;font-size:32px;color:#333;font-weight:normal;">Архивариус: Клиент подключён</div>
<div class="a" style="left:1923px;top:1904.4px;width:910px;height:79.59999999999991px;background:#fff;border:2px solid #d6d6d6;border-radius:8px"></div>
<div class="t" style="left:1949.5px;top:1928.9px;font-size:32px;color:#333;font-weight:normal;">Не переносить объекты с этой стадии</div>
<svg class="a" style="left:2766px;top:1930px" width="44" height="30" viewBox="0 0 44 30" fill="none"><polyline points="11.2,9.7 21,19.2 30.7,9.7" stroke="#465dc8" stroke-width="5.6" stroke-linecap="round" stroke-linejoin="round"/></svg>
<div class="a" style="left:858px;top:2002px;width:2214px;height:112px;background:#f9f9f9"></div>
<div class="a" style="left:858px;top:2114px;width:2214px;height:2px;background:#dcdcdc"></div>
<div class="t" style="left:883px;top:2042.9px;font-size:32px;color:#333;font-weight:normal;">Архивариус: Проебался</div>
<div class="a" style="left:1923px;top:2018.4px;width:910px;height:79.59999999999991px;background:#fff;border:2px solid #d6d6d6;border-radius:8px"></div>
<div class="t" style="left:1949.5px;top:2042.9px;font-size:32px;color:#333;font-weight:normal;">Не переносить объекты с этой стадии</div>
<svg class="a" style="left:2766px;top:2044px" width="44" height="30" viewBox="0 0 44 30" fill="none"><polyline points="11.2,9.7 21,19.2 30.7,9.7" stroke="#465dc8" stroke-width="5.6" stroke-linecap="round" stroke-linejoin="round"/></svg>
<div class="a" style="left:3334.0px;top:209.0px;width:58px;height:58px;border-radius:50%;background:radial-gradient(circle at 50% 35%,#f6f6f6 0%,#eceeee 55%,#dfe2e3 100%);overflow:hidden"><svg width="58" height="58" style="position:absolute;left:0;top:0"><path d="M12 60 c0 -12 3 -20 8 -22 c3 -1 6 -2 9 -2 c3 0 6 1 9 2 c5 2 8 10 8 22z" fill="#9ebddb"/><path d="M20 44 h18 M22 49 h14" stroke="#7c9cc2" stroke-width="1.5"/><rect x="26" y="30" width="6" height="6" fill="#d8a58a"/><ellipse cx="29" cy="23.5" rx="6.5" ry="8" fill="#dcae92"/><path d="M22.5 21 c0 -6 3 -8.5 6.5 -8.5 s6.5 2.5 6.5 8.5 c-2 -3 -4 -3.5 -6.5 -3.5 s-4.5 .5 -6.5 3.5z" fill="#b8965e"/><path d="M12 52 l-1 8 M46 52 l1 8" stroke="#d8a58a" stroke-width="4"/></svg></div>
<div class="a" style="left:3330px;top:294px;width:48px;height:2px;background:rgba(255,255,255,0.2)"></div>
<div class="a" style="left:3332.0px;top:310.0px;width:64px;height:64px;border-radius:50%;background:rgba(255,255,255,0.18)"></div>
<div class="a" style="left:3332.0px;top:394.0px;width:64px;height:64px;border-radius:50%;background:rgba(255,255,255,0.18)"></div>
<div class="a" style="left:3332.0px;top:478.0px;width:64px;height:64px;border-radius:50%;background:rgba(255,255,255,0.18)"></div>
<svg class="a" style="left:3340px;top:318px" width="50" height="50" viewBox="0 0 50 50" fill="none"><path d="M10 33.5 c3 -2.5 4 -5 4 -10 v-3 a11 11 0 0 1 22 0 v3 c0 5 1 7.5 4 10 z" stroke="#fff" stroke-width="3" stroke-linejoin="round"/><path d="M20 37 a5 4 0 0 0 10 0" stroke="#fff" stroke-width="2.6"/><circle cx="25" cy="8.5" r="1.8" fill="#fff"/></svg>
<div class="a" style="left:3372.0px;top:304.0px;width:28px;height:28px;border-radius:50%;background:#f0473c"></div>
<div class="t" style="left:3386px;top:308.2px;font-size:21px;color:#fff;font-weight:normal;transform:translateX(-50%);">7</div>
<svg class="a" style="left:3340px;top:402px" width="50" height="50" viewBox="0 0 50 50" fill="none"><path d="M39.5 31 a17 17 0 1 1 0 -13" stroke="#f2d4e2" stroke-width="2.6" stroke-linecap="round"/><circle cx="24" cy="24" r="11" stroke="#f2d4e2" stroke-width="2.6"/><path d="M23.5 17.5 q1 5 5 6 q-4 1 -5 6 q-1 -5 -5 -6 q4 -1 5 -6z" fill="#f2d4e2"/><circle cx="30" cy="30" r="1.8" fill="#f2d4e2"/></svg>
<svg class="a" style="left:3340px;top:486px" width="50" height="50" viewBox="0 0 50 50" fill="none"><path d="M41 37 a17 17 0 1 0 -5 4.5 l6 1.5 z" stroke="#f2d4e2" stroke-width="2.6" stroke-linejoin="round"/><path d="M15 19.5 h16 M19.5 15 l-4.5 4.5 l4.5 4.5 M34 28.5 h-16 M29.5 24 l4.5 4.5 l-4.5 4.5" stroke="#f2d4e2" stroke-width="2.6" stroke-linecap="round" stroke-linejoin="round"/></svg>
<div class="a" style="left:3340px;top:578px;width:48px;height:2px;background:rgba(255,255,255,0.2)"></div>
<div class="a" style="left:3332.0px;top:616.0px;width:64px;height:64px;border-radius:50%;background:#745080"></div>
<div class="a" style="left:3332.0px;top:708.0px;width:64px;height:64px;border-radius:50%;background:#716e80"></div>
<div class="a" style="left:3332.0px;top:800.0px;width:64px;height:64px;border-radius:50%;background:linear-gradient(180deg,#6e8a84 0%,#8a8c88 60%,#a09088 100%);overflow:hidden"><svg width="64" height="64" style="position:absolute;left:0;top:0"><ellipse cx="17" cy="35" rx="6" ry="8" fill="#7a74a8"/><ellipse cx="49" cy="35" rx="6" ry="8" fill="#7a74a8"/><path d="M13 26 l-4 -8 M51 26 l4 -9" stroke="#7a74a8" stroke-width="3"/><rect x="15" y="17" width="36" height="32" rx="10" fill="#d690a8"/><rect x="21" y="24" width="25" height="21" rx="7" fill="#6a3449"/><ellipse cx="27.5" cy="33" rx="3.5" ry="4.3" fill="#a8a0b2"/><ellipse cx="37.5" cy="33" rx="3.5" ry="4.3" fill="#a8a0b2"/><path d="M30 40 q3 1.5 6 0" stroke="#a8a0b2" stroke-width="1.6" fill="none"/><rect x="20" y="50" width="30" height="20" rx="6" fill="#7a78aa"/><rect x="24" y="52" width="10" height="14" rx="2" fill="#733850"/><circle cx="22" cy="57" r="4" fill="#d690a8"/><circle cx="52" cy="57" r="4" fill="#d690a8"/><path d="M55 52 l5 -9" stroke="#d690a8" stroke-width="4" stroke-linecap="round"/></svg></div>
<div class="a" style="left:3332.0px;top:892.0px;width:64px;height:64px;border-radius:50%;background:#9a5a90"></div>
<div class="a" style="left:3332.0px;top:983.0px;width:64px;height:64px;border-radius:50%;background:#83688b"></div>
<div class="a" style="left:3332.0px;top:1075.0px;width:64px;height:64px;border-radius:50%;background:#8a6a7b"></div>
<div class="a" style="left:3332.0px;top:1167.0px;width:64px;height:64px;border-radius:50%;background:#8b6e68"></div>
<div class="a" style="left:3332.0px;top:1260.0px;width:64px;height:64px;border-radius:50%;background:#a2703d"></div>
<div class="t" style="left:3364px;top:1279.5px;font-size:26px;color:rgba(255,200,190,0.85);font-weight:normal;transform:translateX(-50%);">КЕ</div>
<div class="a" style="left:3332.0px;top:1352.0px;width:64px;height:64px;border-radius:50%;background:#a3627f"></div>
<div class="a" style="left:3332.0px;top:1444.0px;width:64px;height:64px;border-radius:50%;background:#763c32;box-shadow:0 0 0 1.5px rgba(160,60,90,0.7)"><div style="position:absolute;left:0;top:18px;width:64px;text-align:center;font:bold 10.5px/10.5px Liberation Sans;color:#eab2a2;letter-spacing:-0.2px">РУССКИЙ<br>РОБОТ</div><svg width="64" height="64" style="position:absolute;left:0;top:0"><path d="M36.5 43 v10 l3 4 v7 M41.5 47 v17 M48 43 v9 l-3 4 v8 M35.5 54 v10" stroke="#e07a3a" stroke-width="1.4" fill="none"/><circle cx="36.5" cy="42" r="1.6" stroke="#e07a3a" stroke-width="1.2" fill="none"/><circle cx="41.5" cy="46" r="1.6" stroke="#e07a3a" stroke-width="1.2" fill="none"/><circle cx="48" cy="42" r="1.6" stroke="#e07a3a" stroke-width="1.2" fill="none"/><circle cx="35.5" cy="53" r="1.6" stroke="#e07a3a" stroke-width="1.2" fill="none"/></svg></div>
<div class="a" style="left:3332.0px;top:1535.5px;width:64px;height:64px;border-radius:50%;background:#8d6f72"></div>
<div class="a" style="left:3332.0px;top:1627.5px;width:64px;height:64px;border-radius:50%;background:#a57a2d"></div>
<div class="t" style="left:3364px;top:1647.0px;font-size:26px;color:rgba(255,200,190,0.85);font-weight:normal;transform:translateX(-50%);">ЮБ</div>
<div class="a" style="left:3332.0px;top:1720.0px;width:64px;height:64px;border-radius:50%;background:#e2665a"></div>
<div class="t" style="left:3364px;top:1739.5px;font-size:26px;color:rgba(255,200,190,0.85);font-weight:normal;transform:translateX(-50%);">НИ</div>
<div class="a" style="left:3332.0px;top:1812.0px;width:64px;height:64px;border-radius:50%;background:#a27b22"></div>
<div class="t" style="left:3364px;top:1831.5px;font-size:26px;color:rgba(255,200,190,0.85);font-weight:normal;transform:translateX(-50%);">АЛ</div>
<div class="a" style="left:3332.0px;top:1904.0px;width:64px;height:64px;border-radius:50%;background:#c37672"></div>
<div class="t" style="left:3364px;top:1923.5px;font-size:26px;color:rgba(255,200,190,0.85);font-weight:normal;transform:translateX(-50%);">АФ</div>
<div class="a" style="left:3332.0px;top:1996.0px;width:64px;height:64px;border-radius:50%;background:#d2783f"></div>
<div class="t" style="left:3364px;top:2015.5px;font-size:26px;color:rgba(255,200,190,0.85);font-weight:normal;transform:translateX(-50%);">МЗ</div>
<div class="a" style="left:3332.0px;top:2088.0px;width:64px;height:64px;border-radius:50%;background:#f1b27f;overflow:hidden"><div style="position:absolute;left:20px;top:18px;width:25px;height:30px;border-radius:5px;background:linear-gradient(135deg,#9c7078,#c8a088)"></div><div style="position:absolute;left:26px;top:22px;width:13px;height:14px;border-radius:50%;background:#eeae7a"></div><div style="position:absolute;left:11px;top:5px;width:7px;height:7px;border-radius:50%;border:1px solid rgba(120,90,130,0.6)"></div><div style="position:absolute;left:21px;top:7px;width:31px;height:2.5px;background:rgba(120,90,130,0.4)"></div></div>
</div></div>
</body></html>
